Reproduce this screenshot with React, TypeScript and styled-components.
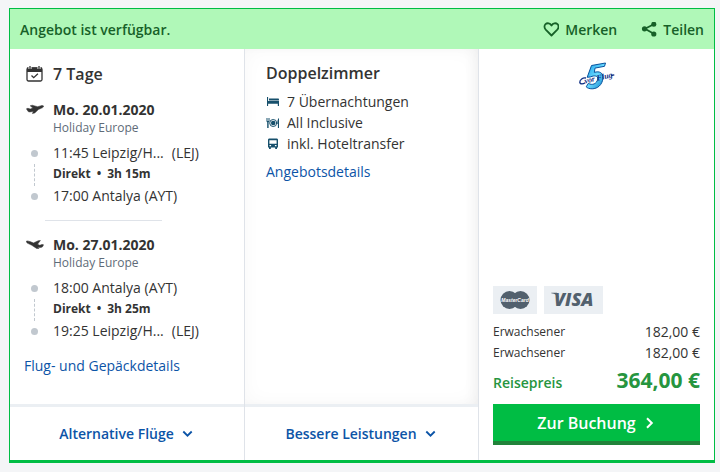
import React from "react";
import styled, { createGlobalStyle } from "styled-components";

const color = {
  page: "#f4f5f7",
  green: "#00bd44",
  mint: "#b0f8b8",
  forest: "#176128",
  price: "#26953f",
  text: "#333333",
  muted: "#5e6b78",
  link: "#0c54a7",
  line: "#dfe3e9",
  soft: "#ebeff3",
  dot: "#c1c8cf",
  icon: "#17506c",
};

const GlobalStyle = createGlobalStyle`
  * { box-sizing: border-box; }
  body {
    margin: 0;
    background: ${color.page};
    color: ${color.text};
    font-family: "Open Sans", "Noto Sans", sans-serif;
    font-size: 14px;
    line-height: 20px;
  }
  svg { display: block; flex: none; }
`;

const Page = styled.main`
  padding: 8px 5px 9px 9px;
`;

const Card = styled.article`
  border: 1px solid ${color.green};
  border-bottom-width: 3px;
  background: #fff;
`;

const StatusBar = styled.header`
  display: flex;
  align-items: center;
  justify-content: space-between;
  height: 40px;
  padding: 1px 10px 0;
  background: ${color.mint};
  color: ${color.forest};
  font-weight: 600;
`;

const Actions = styled.div`
  display: flex;
  gap: 24px;
`;

const ActionButton = styled.button`
  display: flex;
  align-items: center;
  gap: 6px;
  padding: 0;
  border: 0;
  background: none;
  color: inherit;
  font: inherit;
  cursor: pointer;
`;

const Columns = styled.div`
  display: grid;
  grid-template-columns: minmax(0, 234fr) minmax(0, 234fr) minmax(0, 236fr);
`;

const Column = styled.section`
  display: flex;
  flex-direction: column;
  & + & {
    border-left: 1px solid ${color.line};
  }
`;

const FlightBody = styled.div`
  flex: 1;
  padding: 13px 14px 28px;
`;

const RoomBody = styled.div`
  flex: 1;
  padding: 12px 21px;
  box-shadow: inset -8px 0 16px -8px rgba(0, 0, 0, 0.07), inset 0 0 20px rgba(0, 0, 0, 0.03);
`;

const Heading = styled.h2`
  margin: 0;
  font-size: 16px;
  line-height: 24px;
  font-weight: 600;
`;

const IconRow = styled.div`
  display: grid;
  grid-template-columns: 29px 1fr;
  align-items: center;
`;

const IconCell = styled.span`
  display: flex;
  justify-content: center;
  width: 21px;
`;

const Leg = styled.section`
  margin-top: 14px;
`;

const LegDate = styled.h3`
  margin: 0;
  font-size: 14px;
  line-height: 20px;
  font-weight: 700;
`;

const Airline = styled.p`
  margin: 0 0 7px 29px;
  color: ${color.muted};
  font-size: 12px;
  line-height: 16px;
`;

const Dot = styled.span`
  width: 7px;
  height: 7px;
  border-radius: 50%;
  background: ${color.dot};
`;

const Dashes = styled.span`
  height: 22px;
  border-left: 1px dashed ${color.dot};
`;

const Duration = styled.span`
  padding: 1px 0 2px;
  font-size: 12px;
  font-weight: 700;
`;

const Separator = styled.span`
  margin: 0 6px;
`;

const Airport = styled.span`
  margin-left: 8px;
`;

const Divider = styled.hr`
  width: 117px;
  height: 1px;
  margin: 14px 0 0 21px;
  border: 0;
  background: ${color.line};
`;

const TextLink = styled.a`
  display: inline-block;
  color: ${color.link};
  text-decoration: none;
`;

const FlightLink = styled(TextLink)`
  margin-top: 15px;
`;

const Services = styled.ul`
  margin: 6px 0 8px;
  padding: 0;
  list-style: none;
`;

const Service = styled.li`
  display: flex;
  align-items: center;
  gap: 7px;
  line-height: 21px;
  color: ${color.text};
  svg {
    color: ${color.icon};
  }
`;

const Toggle = styled.button`
  display: flex;
  align-items: center;
  justify-content: center;
  gap: 8px;
  height: 56px;
  padding: 0 8px 0 6px;
  border: 0;
  border-top: 3px solid ${color.soft};
  background: #fff;
  color: ${color.link};
  font: inherit;
  font-weight: 600;
  cursor: pointer;
`;

const PriceColumn = styled(Column)`
  padding: 13px 14px 15px;
`;

const Operator = styled.div`
  display: flex;
  flex: 1;
  justify-content: center;
`;

const Payments = styled.div`
  display: flex;
  gap: 7px;
  margin-bottom: 7px;
`;

const Payment = styled.span<{ $wide?: boolean }>`
  display: flex;
  align-items: center;
  justify-content: center;
  width: ${(p) => (p.$wide ? 59 : 44)}px;
  height: 28px;
  background: ${color.soft};
`;

const PriceRow = styled.div`
  display: flex;
  align-items: center;
  justify-content: space-between;
  line-height: 21px;
`;

const Person = styled.span`
  font-size: 12px;
`;

const TotalRow = styled(PriceRow)`
  align-items: baseline;
  margin: 3px 0 7px;
  color: ${color.price};
  font-weight: 600;
  line-height: 28px;
`;

const Total = styled.strong`
  font-size: 21px;
  font-weight: 700;
`;

const BookButton = styled.button`
  display: flex;
  align-items: center;
  justify-content: center;
  gap: 9px;
  height: 41px;
  padding: 0 2px 0 0;
  border: 0;
  border-bottom: 4px solid #21833a;
  background: ${color.green};
  color: #fff;
  font: inherit;
  font-size: 16px;
  font-weight: 600;
  cursor: pointer;
`;

const HeartIcon = () => (
  <svg width="16" height="16" viewBox="0 0 16 16" fill="none" stroke="currentColor" strokeWidth="1.8" strokeLinejoin="round">
    <path d="M8.500 13.500 2.700 7.700C1.100 6 1.100 3.500 2.500 2.200 4.200.6 7 1 8.500 3.500 10 1 12.800.6 14.500 2.200c1.400 1.300 1.400 3.800-.2 5.500Z" />
  </svg>
);

const ShareIcon = () => (
  <svg width="16" height="16" viewBox="0 0 16 16" fill="currentColor">
    <path d="M12.800 2.300 4 6.800l8.800 5" fill="none" stroke="currentColor" strokeWidth="1.800" />
    <circle cx="12.800" cy="2.200" r="2.500" />
    <circle cx="3.500" cy="6.800" r="2.600" />
    <circle cx="12.800" cy="12" r="2.600" />
  </svg>
);

const CalendarIcon = () => (
  <svg width="17" height="17" viewBox="0 0 17 17">
    <rect x="1" y="2" width="15" height="13" rx="1.500" fill="none" stroke="#333" strokeWidth="1.300" />
    <path d="M1 1.500h15V6H1z" fill="#333" />
    <path d="M4 0v3M13 0v3" stroke="#fff" strokeWidth="3" />
    <path d="M4 0v3M13 0v3" stroke="#333" strokeWidth="1.300" />
    <path d="m5.500 9.500 2.200 2.200 4.200-4" fill="none" stroke="#333" strokeWidth="1.300" />
  </svg>
);

const DepartureIcon = () => (
  <svg width="18" height="12" viewBox="0 0 18 12" fill="#333" stroke="#333" strokeWidth=".5" strokeLinejoin="round">
    <path d="M.4 4.800 1.900 4.300 4.300 5 6.800 4.100 4.200 1.800 6.200 1.200 11.600 2.700 14.400 1.900C16 1.400 17.300 1.500 17.600 2.100 17.900 2.900 16.800 3.600 15.700 4.100L12.400 5.500 8.800 8.900 6.400 9.600 7.400 7.200C5.400 7.800 3.500 8.300 2.200 7.600Z" />
  </svg>
);

const ArrivalIcon = () => (
  <svg width="18" height="12" viewBox="0 0 18 12" fill="#333" stroke="#333" strokeWidth=".5" strokeLinejoin="round">
    <path d="M17.600 5.800 16 5.400 13.800 6.300 11.500 5.300 14.400 1.500 12.300 1.700 7.500 3.900 4 2.600C2.200 2 .8 1.600.4 2.200 0 3 1.200 4.100 2.300 4.600L5.800 6.300 10.600 9.400 13 9.500 11.700 7.900C13.500 8.500 15.200 8.800 16.300 8Z" />
  </svg>
);

const BedIcon = () => (
  <svg width="14" height="14" viewBox="0 0 14 14" fill="currentColor">
    <path d="M1 2h1.100v4H13v5h-1.200V8.800H2.100V11H1zM3 3.500h9c.7 0 1 .4 1 1.300v.7H3z" />
  </svg>
);

const MealIcon = () => (
  <svg width="14" height="14" viewBox="0 0 14 14" fill="currentColor">
    <path d="M.5 2h.7v3h.5V2h.7v3h.5V2h.6v3.500l-.9.8V12H1.200V6.300l-.7-.8zM13 2v10h-1.100V8h-.6c-.1-3 .5-5.300 1.700-6z" />
    <circle cx="7.200" cy="7" r="3.500" fill="none" stroke="currentColor" />
    <circle cx="7.200" cy="7" r="2.300" />
  </svg>
);

const BusIcon = () => (
  <svg width="14" height="14" viewBox="0 0 14 14" fill="currentColor">
    <path fillRule="evenodd" d="M3.500 1.500h7c1 0 1.500.5 1.500 1.500v7.500h-1V12H9.200v-1.500H4.800V12H3v-1.500H2V3c0-1 .5-1.500 1.500-1.500ZM3.400 3.300v3.400h7.200V3.300ZM3.500 8v1.300h1.600V8ZM8.900 8v1.300h1.600V8Z" />
  </svg>
);

const ChevronDown = () => (
  <svg width="11" height="8" viewBox="0 0 11 8" fill="none" stroke="currentColor" strokeWidth="1.800">
    <path d="m1.300 1.500 4.200 4.200 4.200-4.200" />
  </svg>
);

const ChevronRight = () => (
  <svg width="9" height="12" viewBox="0 0 9 12" fill="none" stroke="currentColor" strokeWidth="2">
    <path d="m2 1.200 4.800 4.800L2 10.800" />
  </svg>
);

const OperatorLogo = () => (
  <svg width="38" height="30" viewBox="0 0 38 30" role="img" aria-label="5 vor Flug">
    <defs>
      <linearGradient id="five" x1="0" y1="0" x2="1" y2="1">
        <stop offset="0" stopColor="#149be5" />
        <stop offset="0.5" stopColor="#69d9ff" />
        <stop offset="1" stopColor="#087bc5" />
      </linearGradient>
    </defs>
    <path
      d="M13.500 3.500 27.500 1l-1 3.300-9.500 1.800-.7 4.300c5-1.600 9.200.3 8.600 6.100-.7 6.400-5.400 10.300-10.700 10.300-3 0-5-.8-6-2l2.200-3.500c3.600 2.400 8.500.7 9.300-4.200.5-3.400-3.400-4-7-2.200l-3.500.4Z"
      fill="url(#five)"
      stroke="#07529d"
      strokeWidth="1"
    />
    <path d="M8 16c-3-.7-6.500 1.700-6.200 4.500.4 1.900 3.200 1.600 5.500.2M33 13.500l3.300-.7" fill="none" stroke="#102f83" strokeWidth="1.300" />
    <text x="7" y="21.500" transform="rotate(-13 7 21.500)" fill="#102f83" fontFamily="Liberation Serif" fontStyle="italic" fontWeight="700" fontSize="8">
      vor Flug
    </text>
  </svg>
);

const MasterCardLogo = () => (
  <svg width="30" height="18" viewBox="0 0 30 18" role="img" aria-label="MasterCard">
    <circle cx="9.500" cy="9" r="9" fill="#52606d" />
    <circle cx="20.500" cy="9" r="9" fill="#52606d" />
    <text x="15" y="11" textAnchor="middle" fill="#fff" fontFamily="Liberation Sans" fontStyle="italic" fontWeight="700" fontSize="5">
      MasterCard
    </text>
  </svg>
);

const VisaLogo = () => (
  <svg width="46" height="18" viewBox="0 0 46 18" role="img" aria-label="Visa">
    <path d="M.3 1.800H6l2 5C6.500 4.300 4 2.800.3 2.300Z" fill="#52606d" />
    <text x="3" y="15" fill="#52606d" fontFamily="Open Sans" fontStyle="italic" fontWeight="800" fontSize="18">
      VISA
    </text>
  </svg>
);

type Stop = { time: string; place: string; airport?: string };
type FlightLeg = { date: string; duration: string; from: Stop; to: Stop; inbound?: boolean };

const legs: FlightLeg[] = [
  {
    date: "Mo. 20.01.2020",
    duration: "3h 15m",
    from: { time: "11:45", place: "Leipzig/H...", airport: "(LEJ)" },
    to: { time: "17:00", place: "Antalya (AYT)" },
  },
  {
    date: "Mo. 27.01.2020",
    duration: "3h 25m",
    from: { time: "18:00", place: "Antalya (AYT)" },
    to: { time: "19:25", place: "Leipzig/H...", airport: "(LEJ)" },
    inbound: true,
  },
];

const services = [
  { label: "7 Übernachtungen", Icon: BedIcon },
  { label: "All Inclusive", Icon: MealIcon },
  { label: "inkl. Hoteltransfer", Icon: BusIcon },
];

const StopRow = ({ stop }: { stop: Stop }) => (
  <IconRow>
    <IconCell><Dot /></IconCell>
    <span>
      {stop.time} {stop.place}
      {stop.airport && <Airport>{stop.airport}</Airport>}
    </span>
  </IconRow>
);

const FlightLegView = ({ leg }: { leg: FlightLeg }) => (
  <Leg>
    <IconRow>
      <IconCell>{leg.inbound ? <ArrivalIcon /> : <DepartureIcon />}</IconCell>
      <LegDate>{leg.date}</LegDate>
    </IconRow>
    <Airline>Holiday Europe</Airline>
    <StopRow stop={leg.from} />
    <IconRow>
      <IconCell><Dashes /></IconCell>
      <Duration>
        Direkt<Separator>•</Separator>{leg.duration}
      </Duration>
    </IconRow>
    <StopRow stop={leg.to} />
  </Leg>
);

export default function App() {
  return (
    <>
      <GlobalStyle />
      <Page>
        <Card>
          <StatusBar>
            <span>Angebot ist verfügbar.</span>
            <Actions>
              <ActionButton type="button"><HeartIcon />Merken</ActionButton>
              <ActionButton type="button"><ShareIcon />Teilen</ActionButton>
            </Actions>
          </StatusBar>
          <Columns>
            <Column>
              <FlightBody>
                <IconRow>
                  <IconCell><CalendarIcon /></IconCell>
                  <Heading>7 Tage</Heading>
                </IconRow>
                <FlightLegView leg={legs[0]} />
                <Divider />
                <FlightLegView leg={legs[1]} />
                <FlightLink href="#flug">Flug- und Gepäckdetails</FlightLink>
              </FlightBody>
              <Toggle type="button">Alternative Flüge<ChevronDown /></Toggle>
            </Column>
            <Column>
              <RoomBody>
                <Heading>Doppelzimmer</Heading>
                <Services>
                  {services.map(({ label, Icon }) => (
                    <Service key={label}><Icon />{label}</Service>
                  ))}
                </Services>
                <TextLink href="#angebot">Angebotsdetails</TextLink>
              </RoomBody>
              <Toggle type="button">Bessere Leistungen<ChevronDown /></Toggle>
            </Column>
            <PriceColumn>
              <Operator><OperatorLogo /></Operator>
              <Payments>
                <Payment><MasterCardLogo /></Payment>
                <Payment $wide><VisaLogo /></Payment>
              </Payments>
              <PriceRow><Person>Erwachsener</Person><span>182,00 €</span></PriceRow>
              <PriceRow><Person>Erwachsener</Person><span>182,00 €</span></PriceRow>
              <TotalRow><span>Reisepreis</span><Total>364,00 €</Total></TotalRow>
              <BookButton type="button">Zur Buchung<ChevronRight /></BookButton>
            </PriceColumn>
          </Columns>
        </Card>
      </Page>
    </>
  );
}
